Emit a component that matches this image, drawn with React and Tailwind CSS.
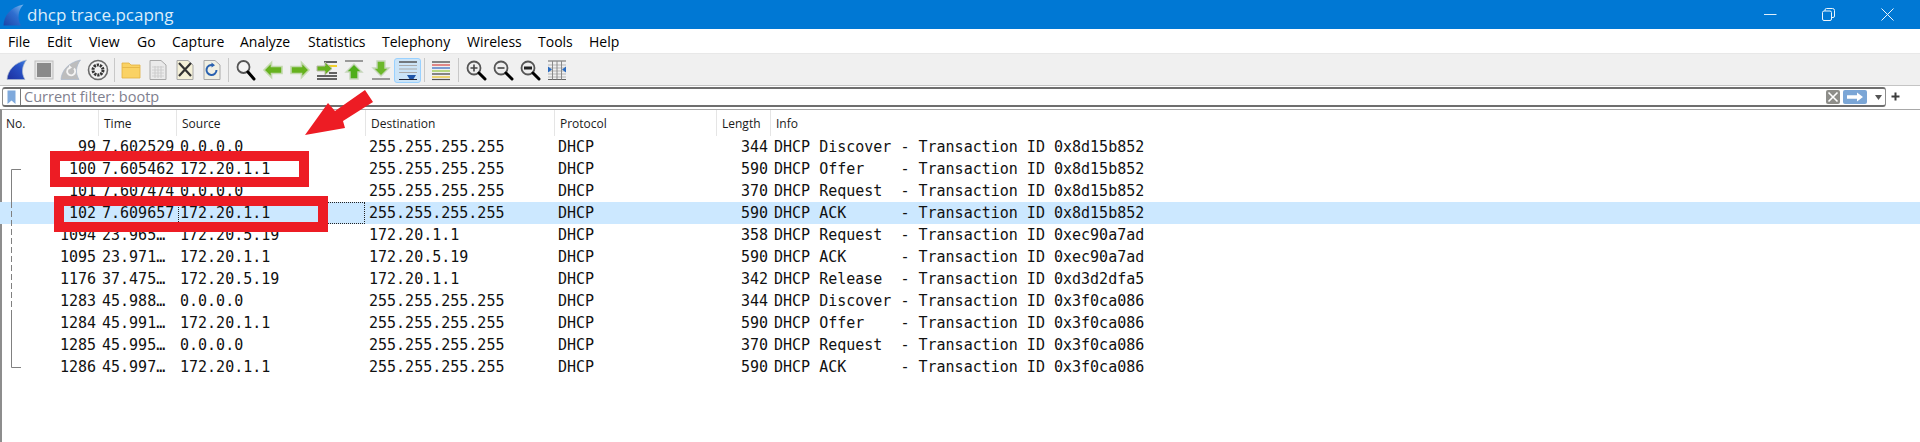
import React from "react";

const rows = [
  ["99", "7.602529", "0.0.0.0", "255.255.255.255", "344", "DHCP Discover - Transaction ID 0x8d15b852"],
  ["100", "7.605462", "172.20.1.1", "255.255.255.255", "590", "DHCP Offer    - Transaction ID 0x8d15b852"],
  ["101", "7.607474", "0.0.0.0", "255.255.255.255", "370", "DHCP Request  - Transaction ID 0x8d15b852"],
  ["102", "7.609657", "172.20.1.1", "255.255.255.255", "590", "DHCP ACK      - Transaction ID 0x8d15b852"],
  ["1094", "23.965…", "172.20.5.19", "172.20.1.1", "358", "DHCP Request  - Transaction ID 0xec90a7ad"],
  ["1095", "23.971…", "172.20.1.1", "172.20.5.19", "590", "DHCP ACK      - Transaction ID 0xec90a7ad"],
  ["1176", "37.475…", "172.20.5.19", "172.20.1.1", "342", "DHCP Release  - Transaction ID 0xd3d2dfa5"],
  ["1283", "45.988…", "0.0.0.0", "255.255.255.255", "344", "DHCP Discover - Transaction ID 0x3f0ca086"],
  ["1284", "45.991…", "172.20.1.1", "255.255.255.255", "590", "DHCP Offer    - Transaction ID 0x3f0ca086"],
  ["1285", "45.995…", "0.0.0.0", "255.255.255.255", "370", "DHCP Request  - Transaction ID 0x3f0ca086"],
  ["1286", "45.997…", "172.20.1.1", "255.255.255.255", "590", "DHCP ACK      - Transaction ID 0x3f0ca086"],
];

const menus = [
  ["File", "w-[39px]"],
  ["Edit", "w-[42px]"],
  ["View", "w-[48px]"],
  ["Go", "w-[35px]"],
  ["Capture", "w-[68px]"],
  ["Analyze", "w-[68px]"],
  ["Statistics", "w-[74px]"],
  ["Telephony", "w-[85px]"],
  ["Wireless", "w-[71px]"],
  ["Tools", "w-[51px]"],
  ["Help", "w-[40px]"],
];

function Ic({ children }) {
  return (
    <div className="w-[27px] h-[30px] flex items-center justify-center shrink-0">
      <svg width="22" height="22" viewBox="0 0 22 22">{children}</svg>
    </div>
  );
}

const Fin = ({ fill = "#2346b4" }) => (
  <path d="M1 20.5C1.5 12 8 3.5 20.5 1C16 7 15 14 19 20.5Z" fill={fill} stroke="#a9b8cc" strokeWidth="0.7" />
);

const Doc = ({ fill = "#f4f0d8" }) => (
  <path d="M3 1.5H14L19 6V20.5H3Z" fill={fill} stroke="#a8a8a8" strokeWidth="1" />
);

const Lens = ({ children }) => (
  <>
    <circle cx="9" cy="9" r="6.5" fill="#eeeeee" stroke="#555555" strokeWidth="1.8" />
    <path d="M14 14L20 20" stroke="#000" strokeWidth="3" strokeLinecap="round" />
    {children}
  </>
);

function Toolbar() {
  return (
    <div className="h-[30px] bg-[#f0f0f0] border-b border-[#c4c4c4] box-content flex items-center pl-[3px]">
      <Ic>
        <defs>
          <linearGradient id="fb" x1="0" y1="1" x2="1" y2="0">
            <stop offset="0" stopColor="#1c2f9e" />
            <stop offset="0.6" stopColor="#2850c4" />
            <stop offset="1" stopColor="#3f80e0" />
          </linearGradient>
        </defs>
        <Fin fill="url(#fb)" />
      </Ic>
      <Ic>
        <rect x="2" y="2" width="18" height="18" fill="#e6e6e6" stroke="#bdbdbd" />
        <rect x="4" y="4" width="14" height="14" fill="#8a8a8a" />
      </Ic>
      <Ic>
        <Fin fill="#bdbdbd" />
        <path d="M14 9.5a4 4 0 1 1-4-1" fill="none" stroke="#f4f4f4" strokeWidth="1.8" />
        <path d="M9 6l3 2.5-3 2z" fill="#f4f4f4" />
      </Ic>
      <Ic>
        <circle cx="11" cy="11" r="9.5" fill="#f2f2f2" stroke="#6a6a6a" strokeWidth="1.6" />
        <circle cx="11" cy="11" r="5" fill="none" stroke="#333" strokeWidth="3" strokeDasharray="2.2 0.9" />
        <circle cx="11" cy="11" r="2.4" fill="#f2f2f2" />
      </Ic>
      <div className="w-[6px] h-[24px] flex justify-center shrink-0"><div className="w-px h-full bg-[#c8c8c8]" /></div>
      <Ic>
        <path d="M2 4H9L11 6H20V19H2Z" fill="#fad264" stroke="#e2b040" strokeWidth="0.8" />
        <rect x="2" y="8" width="18" height="1" fill="#e8b94a" />
      </Ic>
      <Ic>
        <Doc fill="#eaeaea" />
        <path d="M5 8H17M5 11H17M5 14H17M5 17H17M8 7V19M11 7V19M14 7V19" stroke="#cfcfcf" strokeWidth="1.2" />
      </Ic>
      <Ic>
        <Doc />
        <path d="M5 4L17 17M17 4L5 17" stroke="#333" strokeWidth="2.2" />
      </Ic>
      <Ic>
        <Doc fill="#f0f0e4" />
        <path d="M15.5 11a5 5 0 1 1-3.5-4.8" fill="none" stroke="#2a62b0" strokeWidth="2" />
        <path d="M10.5 3.5l3.5 2.7-3.5 2.3z" fill="#2a62b0" />
      </Ic>
      <div className="w-[7px] h-[24px] flex justify-center shrink-0"><div className="w-px h-full bg-[#c8c8c8]" /></div>
      <Ic>
        <circle cx="8.5" cy="8" r="6" fill="#f4f4f4" stroke="#555" strokeWidth="1.8" />
        <path d="M13 13L19 20" stroke="#000" strokeWidth="3" strokeLinecap="round" />
      </Ic>
      <Ic>
        <path d="M2 11L9.5 3.5V7.5H20V14.5H9.5V18.5Z" fill="#66b21e" stroke="#c3d9ae" strokeWidth="1.6" />
      </Ic>
      <Ic>
        <path d="M20 11L12.5 3.5V7.5H2V14.5H12.5V18.5Z" fill="#66b21e" stroke="#c3d9ae" strokeWidth="1.6" />
      </Ic>
      <Ic>
        <path d="M8 3H21M13 7H21M13 14H21M1 17H21M1 20H21" stroke="#333" strokeWidth="1.3" />
        <path d="M13 7H21" stroke="#f2d02c" strokeWidth="2" />
        <path d="M1 7H9V3L16 9.5L9 16V12H1Z" fill="#66b21e" stroke="#b9b9a8" strokeWidth="1" />
      </Ic>
      <Ic>
        <path d="M2 2H20" stroke="#9a9a9a" strokeWidth="2" />
        <path d="M11 5L19 13H15V20H7V13H3Z" fill="#4fae1a" stroke="#c6d6bb" strokeWidth="1.4" />
      </Ic>
      <Ic>
        <path d="M2 20H20" stroke="#9a9a9a" strokeWidth="2" />
        <path d="M11 17L19 9H15V2H7V9H3Z" fill="#6cb82a" stroke="#c6d6bb" strokeWidth="1.4" />
      </Ic>
      <div className="w-[27px] h-[25px] flex items-center justify-center shrink-0 bg-[#cce4f7] border border-[#99d1ff] rounded-[3px]">
        <svg width="22" height="22" viewBox="0 0 22 22">
          <path d="M2 3H20" stroke="#555" strokeWidth="1.5" />
          <path d="M2 6.5H20M2 10H20M2 13.5H20" stroke="#aaa" strokeWidth="1.2" />
          <path d="M2 20.5H20" stroke="#223" strokeWidth="1" />
          <path d="M10 16H19L16.5 20H12.5Z" fill="#1f55a8" />
        </svg>
      </div>
      <div className="w-[6px] h-[24px] flex justify-center shrink-0"><div className="w-px h-full bg-[#c8c8c8]" /></div>
      <Ic>
        <path d="M2 3H20" stroke="#555" strokeWidth="1.4" />
        <path d="M2 6H20" stroke="#d85a5a" strokeWidth="1.4" />
        <path d="M2 9H20" stroke="#4a78c8" strokeWidth="1.4" />
        <path d="M2 12H20" stroke="#9ccc50" strokeWidth="1.4" />
        <path d="M2 15H20" stroke="#555" strokeWidth="1.4" />
        <path d="M2 18H20" stroke="#e8c83c" strokeWidth="1.4" />
        <path d="M2 20.5H20" stroke="#555" strokeWidth="1.2" />
      </Ic>
      <div className="w-[8px] h-[24px] flex justify-center shrink-0"><div className="w-px h-full bg-[#c8c8c8]" /></div>
      <Ic>
        <Lens>
          <path d="M5.5 9H12.5M9 5.5V12.5" stroke="#444" strokeWidth="1.6" />
        </Lens>
      </Ic>
      <Ic>
        <Lens>
          <path d="M5.5 9H12.5" stroke="#444" strokeWidth="1.6" />
        </Lens>
      </Ic>
      <Ic>
        <Lens>
          <path d="M5 9H13" stroke="#222" strokeWidth="3" />
        </Lens>
      </Ic>
      <Ic>
        <path d="M2 6H20M2 9H20M2 12H20M2 15H20M2 18H20" stroke="#b5b5b5" strokeWidth="1" />
        <path d="M2 2H20M2 20.5H20" stroke="#666" strokeWidth="1" />
        <path d="M6.5 2V20.5M15.5 2V20.5M11 2V20.5" stroke="#8a8a8a" strokeWidth="1" />
        <path d="M2 7.5L6 10.5L2 13.5ZM16 10.5L20 7.5V13.5Z" fill="#2a6bc0" />
      </Ic>
    </div>
  );
}

function FilterBar() {
  return (
    <div className="h-[23px] bg-white flex items-start pt-px">
      <div className="ml-[2px] w-[1884px] h-[20px] border-y-2 border-x border-y-[#6e6e6e] border-x-[#8c8c8c] rounded-[3px] flex items-center box-border">
        <div className="w-[18px] h-full border-r border-[#777] flex items-center justify-center shrink-0">
          <svg width="9" height="15" viewBox="0 0 9 15"><path d="M0.5 0.5H8.5V14L4.5 10.5L0.5 14Z" fill="#7fa9dc" /></svg>
        </div>
        <span className="ml-[3px] text-[14.5px] text-[#80808e] leading-none">Current filter: bootp</span>
        <div className="ml-auto flex items-center">
          <div className="w-[14px] h-[14px] bg-[#8e8e8a] rounded-[2px] flex items-center justify-center">
            <svg width="12" height="12" viewBox="0 0 12 12"><path d="M1.5 1.5L10.5 10.5M10.5 1.5L1.5 10.5" stroke="#fff" strokeWidth="1.6" /></svg>
          </div>
          <div className="ml-[3px] w-[24px] h-[14px] bg-[#7ba6d6] rounded-[2px] flex items-center justify-center">
            <svg width="18" height="10" viewBox="0 0 18 10"><path d="M1 3.2H11V0.5L17 5L11 9.5V6.8H1Z" fill="#fff" /></svg>
          </div>
          <div className="ml-[6px] mr-[2px] w-[10px] flex justify-center">
            <svg width="7" height="5" viewBox="0 0 7 5"><path d="M0 0H7L3.5 5Z" fill="#555" /></svg>
          </div>
        </div>
      </div>
      <svg className="ml-[5px] mt-[5px]" width="9" height="9" viewBox="0 0 9 9"><path d="M4.5 0.5V8.5M0.5 4.5H8.5" stroke="#3c3c3c" strokeWidth="2" /></svg>
    </div>
  );
}

const head = "shrink-0 h-full pl-[5px] pt-[2px] border-r border-[#e5e5e5] flex items-center";

function PacketList() {
  return (
    <div className="flex-1 bg-white border-l-2 border-l-[#8d8d8d] border-t border-t-[#a8a8a8]">
      <div className="h-[26px] flex text-[12px] text-[#1a1a1a] -ml-[2px]">
        <div className={`${head} w-[99px] pl-[6px]`}>No.</div>
        <div className={`${head} w-[78px]`}>Time</div>
        <div className={`${head} w-[189px]`}>Source</div>
        <div className={`${head} w-[189px]`}>Destination</div>
        <div className={`${head} w-[162px]`}>Protocol</div>
        <div className={`${head} w-[54px]`}>Length</div>
        <div className="pl-[5px] pt-[2px] flex items-center">Info</div>
      </div>
      <div className="-ml-[2px] font-['DejaVu_Sans_Mono','Liberation_Mono',monospace] text-[15px] text-[#111]">
        {rows.map((r) => {
          const sel = r[0] === "102";
          return (
            <div key={r[0]} className={`h-[22px] flex items-center whitespace-pre ${sel ? "bg-[#cce8ff]" : ""}`}>
              <div className="w-[98px] shrink-0 text-right pr-[2px]">{r[0]}</div>
              <div className="w-[80px] shrink-0 pl-[4px]">{r[1]}</div>
              <div className={`w-[187px] shrink-0 h-full flex items-center ${sel ? "border border-dotted border-[#222] pl-px" : "pl-[2px]"}`}>{r[2]}</div>
              <div className="w-[189px] shrink-0 pl-[4px]">{r[3]}</div>
              <div className="w-[162px] shrink-0 pl-[4px]">DHCP</div>
              <div className="w-[54px] shrink-0 text-right pr-[2px]">{r[4]}</div>
              <div className="pl-[4px]">{r[5]}</div>
            </div>
          );
        })}
      </div>
    </div>
  );
}

export default function App() {
  return (
    <div className="relative w-[1920px] h-[442px] bg-white overflow-hidden flex flex-col font-['Open_Sans','Noto_Sans',sans-serif]">
      <div className="h-[29px] bg-[#0078d4] flex items-center shrink-0">
        <svg className="ml-[3px]" width="21" height="22" viewBox="0 0 21 22">
          <defs>
            <linearGradient id="tf" x1="0" y1="1" x2="1" y2="0">
              <stop offset="0" stopColor="#1a45a8" />
              <stop offset="0.55" stopColor="#2f6fd0" />
              <stop offset="1" stopColor="#7dbcf0" />
            </linearGradient>
          </defs>
          <path d="M0.5 21.5C1 12 7 3 20.5 0.5C15 6 14 15 18 21.5Z" fill="url(#tf)" />
        </svg>
        <span className="ml-[3px] text-[17px] text-[#dcedfa] leading-none">dhcp trace.pcapng</span>
        <div className="ml-auto flex items-center">
          <svg width="13" height="13" viewBox="0 0 13 13"><path d="M0 6.5H12.5" stroke="#dfeefa" strokeWidth="1" /></svg>
          <svg className="ml-[45px]" width="13" height="13" viewBox="0 0 13 13" fill="none" stroke="#eef6fc" strokeWidth="1"><rect x="0.5" y="3" width="9" height="9.5" rx="1.5" /><path d="M3 3V2A1.5 1.5 0 0 1 4.5 0.5H10.5A2 2 0 0 1 12.5 2.5V8A1.5 1.5 0 0 1 11 9.5H9.5" /></svg>
          <svg className="ml-[46px] mr-[26px]" width="13" height="13" viewBox="0 0 13 13"><path d="M0.5 0.5L12.5 12.5M12.5 0.5L0.5 12.5" stroke="#eef6fc" strokeWidth="1" /></svg>
        </div>
      </div>
      <div className="h-[25px] bg-white flex items-center pl-[8px] pt-[2px] text-[14px] text-black shrink-0 border-b border-[#e8e8e8] box-border">
        {menus.map(([m, w]) => (
          <div key={m} className={`${w} shrink-0 leading-none`}>{m}</div>
        ))}
      </div>
      <div className="h-px shrink-0 bg-[#f0f0f0]" />
      <Toolbar />
      <FilterBar />
      <PacketList />

      <svg className="absolute left-0 top-0" width="30" height="442" viewBox="0 0 30 442">
        <path d="M21 169.5H11.5V202" fill="none" stroke="#808080" />
        <path d="M11.5 202V310" fill="none" stroke="#808080" strokeDasharray="6 3" />
        <path d="M11.5 310V367.5H21" fill="none" stroke="#808080" />
      </svg>

      <div className="absolute left-[50px] top-[151px] w-[259px] h-[36px] border-[10px] border-[#ed1c24]" />
      <div className="absolute left-[54px] top-[196px] w-[274px] h-[36px] border-[10px] border-[#ed1c24]" />
      <svg className="absolute left-[300px] top-[85px]" width="80" height="55" viewBox="300 85 80 55">
        <polygon points="305,135 328,103 335,111 365,90 373,102 343,121 345,128" fill="#ed1c24" />
      </svg>
    </div>
  );
}
